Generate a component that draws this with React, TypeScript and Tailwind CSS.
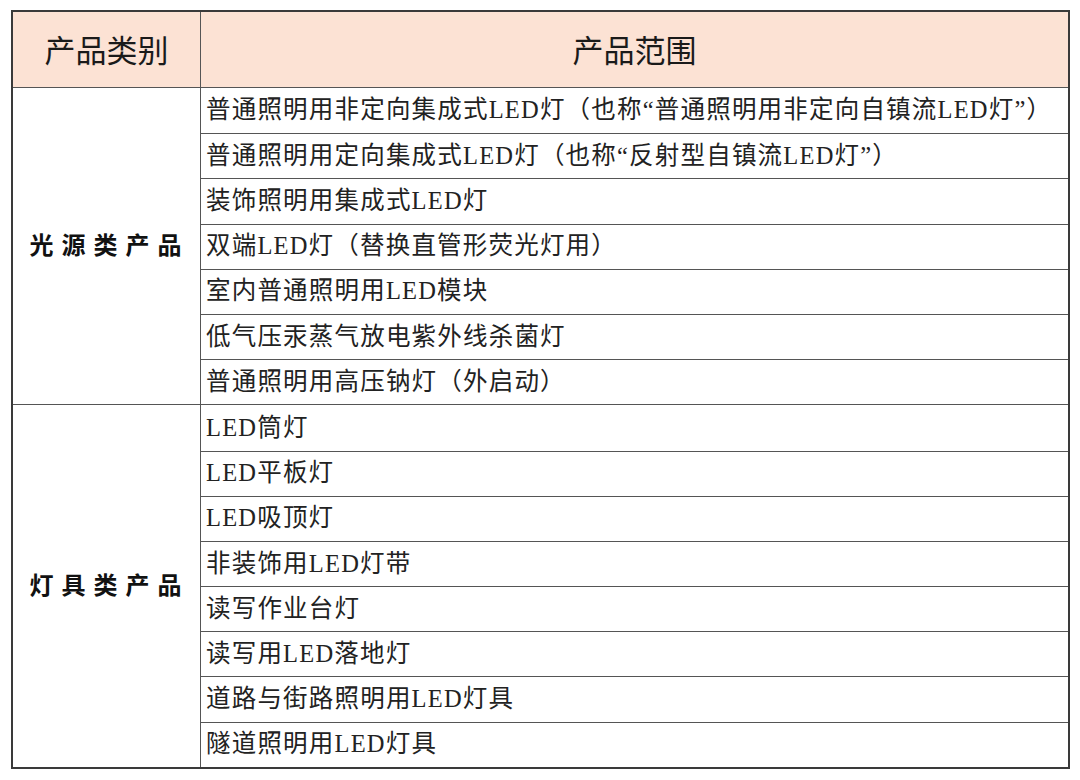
const groups = [
  {
    label: '光源类产品',
    items: [
      '普通照明用非定向集成式LED灯（也称“普通照明用非定向自镇流LED灯”）',
      '普通照明用定向集成式LED灯（也称“反射型自镇流LED灯”）',
      '装饰照明用集成式LED灯',
      '双端LED灯（替换直管形荧光灯用）',
      '室内普通照明用LED模块',
      '低气压汞蒸气放电紫外线杀菌灯',
      '普通照明用高压钠灯（外启动）',
    ],
  },
  {
    label: '灯具类产品',
    items: [
      'LED筒灯',
      'LED平板灯',
      'LED吸顶灯',
      '非装饰用LED灯带',
      '读写作业台灯',
      '读写用LED落地灯',
      '道路与街路照明用LED灯具',
      '隧道照明用LED灯具',
    ],
  },
];

const serif = { fontFamily: '"Liberation Serif", "Noto Sans CJK SC", serif' };

export default function App() {
  return (
    <div className="w-[1080px] h-[780px] bg-white pt-[10px] pl-[11px]">
      <div className="w-[1059px] border-2 border-[#3a3a3a] flex flex-col">
        {/* Header */}
        <div
          className="flex h-[76px] bg-[#fce2d4] border-b-[1.5px] border-[#555]"
          style={{ fontFamily: '"Noto Sans CJK SC", sans-serif' }}
        >
          <div className="w-[188px] shrink-0 border-r-[1.5px] border-[#555] flex items-center justify-center text-[31px] text-[#1a1a1a]">
            产品类别
          </div>
          <div className="flex-1 flex items-center justify-center text-[31px] text-[#1a1a1a]">
            产品范围
          </div>
        </div>

        {groups.map((g, gi) => (
          <div
            key={g.label}
            className={gi > 0 ? 'flex border-t-[1.5px] border-[#555]' : 'flex'}
          >
            <div
              className="w-[188px] shrink-0 border-r-[1.5px] border-[#555] flex items-center justify-center pl-[6px] text-[24px] font-bold tracking-[8px] text-[#111]"
              style={serif}
            >
              {g.label}
            </div>
            <div className="flex-1 flex flex-col">
              {g.items.map((item, i) => (
                <div
                  key={item}
                  className={
                    i > 0
                      ? 'h-[45.2px] border-t-[1.5px] border-[#555] flex items-center pl-[5px] text-[24.5px] tracking-[1.2px] text-[#222] whitespace-nowrap'
                      : 'h-[45.2px] flex items-center pl-[5px] text-[24.5px] tracking-[1.2px] text-[#222] whitespace-nowrap'
                  }
                  style={serif}
                >
                  {item}
                </div>
              ))}
            </div>
          </div>
        ))}
      </div>
    </div>
  );
}
